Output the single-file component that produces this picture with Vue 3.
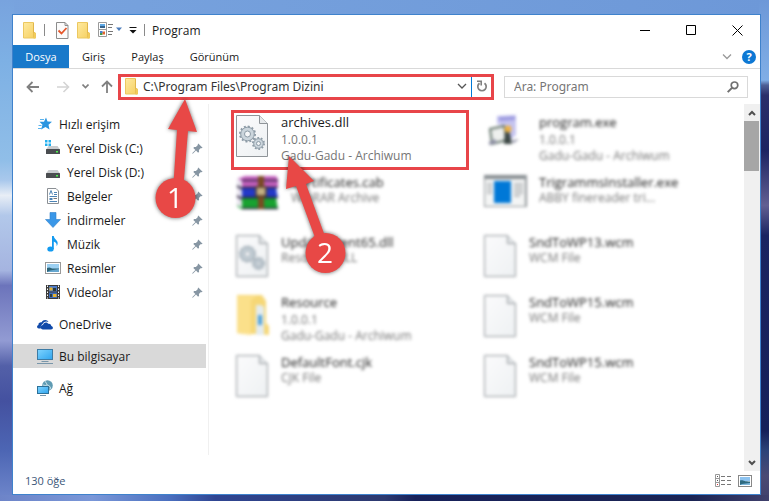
<script setup>
import { ref } from 'vue'

const address = ref('C:\\Program Files\\Program Dizini')
const search = ref('')
const tabs = ['Giriş', 'Paylaş', 'Görünüm']

const places = [
  { label: 'Hızlı erişim', icon: 'star' },
  { label: 'Yerel Disk (C:)', icon: 'driveC', sub: true },
  { label: 'Yerel Disk (D:)', icon: 'drive', sub: true },
  { label: 'Belgeler', icon: 'docs', sub: true },
  { label: 'İndirmeler', icon: 'down', sub: true },
  { label: 'Müzik', icon: 'music', sub: true },
  { label: 'Resimler', icon: 'picture', sub: true },
  { label: 'Videolar', icon: 'video', sub: true },
  { label: 'OneDrive', icon: 'cloud', group: true },
  { label: 'Bu bilgisayar', icon: 'pc', group: true, active: true },
  { label: 'Ağ', icon: 'network', group: true },
]

const files = [
  { name: 'archives.dll', lines: ['1.0.0.1', 'Gadu-Gadu - Archiwum'], icon: 'dll', marked: true },
  { name: 'program.exe', lines: ['1.0.0.1', 'Gadu-Gadu - Archiwum'], icon: 'exe', wide: true },
  { name: 'Certificates.cab', lines: ['WinRAR Archive'], icon: 'rar', wide: true },
  { name: 'TrigrammsInstaller.exe', lines: ['ABBY finereader tri...'], icon: 'app', wide: true },
  { name: 'UpdateAgent65.dll', lines: ['Resource DLL'], icon: 'dll' },
  { name: 'SndToWP13.wcm', lines: ['WCM File'], icon: 'page' },
  { name: 'Resource', lines: ['1.0.0.1', 'Gadu-Gadu - Archiwum'], icon: 'folder' },
  { name: 'SndToWP15.wcm', lines: ['WCM File'], icon: 'page' },
  { name: 'DefaultFont.cjk', lines: ['CJK File'], icon: 'page' },
  { name: 'SndToWP15.wcm', lines: ['WCM File'], icon: 'page' },
]
</script>

<template>
  <div class="desktop">
    <svg class="defs" width="0" height="0" aria-hidden="true">
      <defs>
        <linearGradient id="gFolder" x1="0" y1="0" x2="1" y2="1">
          <stop offset="0" stop-color="#ffeaa0" />
          <stop offset="1" stop-color="#f5cf5f" />
        </linearGradient>
        <linearGradient id="gPage" x1="0" y1="0" x2="1" y2="1">
          <stop offset="0" stop-color="#fbfbfc" />
          <stop offset="1" stop-color="#eef1f3" />
        </linearGradient>
        <linearGradient id="gScreen" x1="0" y1="0" x2="1" y2="1">
          <stop offset="0" stop-color="#7fd4ff" />
          <stop offset="1" stop-color="#2fa4ee" />
        </linearGradient>
        <symbol id="folder" viewBox="0 0 14 17">
          <path d="M0.500 0.500h10v9.500l2 1v5h-12z" fill="url(#gFolder)" stroke="#ecc860" />
          <path d="M10.500 1v14.500" stroke="#e0b64c" />
          <path d="M10.500 10.500l2 1v5h-2z" fill="#f2cb5b" />
        </symbol>
        <symbol id="pin" viewBox="0 0 11 11">
          <path d="M6.300 0.400l4.300 4.300-1 0.600-0.700-0.200-2 2 0.200 1.700-1 0.900-2.100-2.100-3 3-0.800 0.200 0.200-0.800 3-3-2.100-2.100 0.900-1 1.700 0.200 2-2-0.200-0.700z" fill="#8796a3" />
        </symbol>
      </defs>
    </svg>

    <main class="window">
      <header class="titlebar">
        <svg class="i-folder" viewBox="0 0 14 17"><use href="#folder" /></svg>
        <span class="sep first"></span>
        <button class="tool" aria-label="Özellikler">
          <svg width="14" height="17" viewBox="0 0 14 17"><path d="M0.500 0.500h8.500l3 3v13h-11.500z" fill="#fbfbfb" stroke="#8c8c8c" /><path d="M9 0.500v3h3" fill="none" stroke="#8c8c8c" /><path d="M2.500 8.500l3 3 5-5.500" fill="none" stroke="#e5562a" stroke-width="1.800" /></svg>
        </button>
        <button class="tool" aria-label="Yeni klasör">
          <svg class="i-folder" viewBox="0 0 14 17"><use href="#folder" /></svg>
        </button>
        <button class="tool" aria-label="Görünümler">
          <svg width="24" height="16" viewBox="0 0 24 16"><path d="M0.500 0.500h8v7h-8zM0.500 7.500h8v7h-8z" fill="#fff" stroke="#9a9a9a" /><path d="M2 2h5v2h-5z" fill="#5ea9e6" /><path d="M2 4h5v2h-5z" fill="#33628e" /><path d="M2 10h2.500v3h-2.500z" fill="#3f9a4c" /><path d="M4.500 9.500h2.500v3h-2.500z" fill="#e2642f" /><path d="M2 9h2.500v2h-2.500z" fill="#4a7fd0" /><path d="M10 2.500h5M10 5.500h4M10 9.500h5M10 12.500h4" stroke="#777" /><path d="M18 5.500h6l-3 3.500z" fill="#4d7dbb" /></svg>
        </button>
        <button class="tool" aria-label="Hızlı erişim araç çubuğunu özelleştir">
          <svg width="8" height="8" viewBox="0 0 8 8"><path d="M0.500 1h7v1h-7zM0.500 4h7l-3.500 3.500z" fill="#111" /></svg>
        </button>
        <span class="sep"></span>
        <h1 class="title">Program</h1>
        <div class="controls">
          <button aria-label="Simge durumuna küçült"><svg width="11" height="11"><path d="M0 5.500h10" stroke="#000" /></svg></button>
          <button aria-label="Ekranı kapla"><svg width="11" height="11"><path d="M0.500 0.500h9v9h-9z" fill="none" stroke="#000" /></svg></button>
          <button aria-label="Kapat"><svg width="11" height="11"><path d="M0.500 0.500l10 10M10.500 0.500l-10 10" stroke="#000" /></svg></button>
        </div>
      </header>

      <nav class="ribbon">
        <button class="tab file">Dosya</button>
        <button v-for="t in tabs" :key="t" class="tab">{{ t }}</button>
        <span class="grow"></span>
        <button class="tool" aria-label="Şeridi genişlet"><svg width="10" height="6"><path d="M1 0.500l4 4 4-4" fill="none" stroke="#999" stroke-width="1.300" /></svg></button>
        <button class="help" aria-label="Yardım">?</button>
      </nav>

      <div class="navrow">
        <button class="tool" aria-label="Geri"><svg width="14" height="12"><path d="M13 6h-11M6.500 1l-5 5 5 5" fill="none" stroke="#808080" stroke-width="1.800" /></svg></button>
        <button class="tool" aria-label="İleri"><svg width="14" height="12"><path d="M1 6h11M7.500 1l5 5-5 5" fill="none" stroke="#d4d4d4" stroke-width="1.600" /></svg></button>
        <button class="tool close" aria-label="Son konumlar"><svg width="7" height="5"><path d="M0.500 0.500l3 3 3-3" fill="none" stroke="#808080" stroke-width="1.600" /></svg></button>
        <button class="tool" aria-label="Yukarı"><svg width="12" height="13"><path d="M6 13v-11M1 6.500l5-5 5 5" fill="none" stroke="#808080" stroke-width="1.800" /></svg></button>
        <div class="address">
          <svg class="i-folder" viewBox="0 0 14 17"><use href="#folder" /></svg>
          <input v-model="address" type="text" aria-label="Adres" />
          <button class="drop" aria-label="Önceki konumlar"><svg width="10" height="7"><path d="M1 1l4 4 4-4" fill="none" stroke="#555" stroke-width="1.300" /></svg></button>
          <button class="refresh" aria-label="Yenile"><svg width="12" height="13" viewBox="0 0 12 13"><path d="M8.500 3.200a4.200 4.200 0 1 1-5 0" fill="none" stroke="#808080" stroke-width="1.700" /><path d="M1 1.300h4.200v4.200" fill="none" stroke="#808080" stroke-width="1.600" /></svg></button>
        </div>
        <form class="search" @submit.prevent>
          <input v-model="search" type="text" placeholder="Ara: Program" aria-label="Ara: Program" />
          <button class="tool" aria-label="Ara"><svg width="12" height="12"><circle cx="7.500" cy="4.300" r="3.300" fill="none" stroke="#707070" stroke-width="1.700" /><path d="M5.200 6.600l-4.500 4.500" stroke="#707070" stroke-width="2" /></svg></button>
        </form>
      </div>

      <div class="body">
        <aside class="sidebar">
          <a v-for="p in places" :key="p.label" href="#" class="place" :class="{ sub: p.sub, group: p.group, active: p.active }">
            <svg class="picon" width="16" height="16" viewBox="0 0 16 16">
              <g v-if="p.icon === 'star'">
                <path d="M9 1.500l1.500 4 4.500 0.200-3.500 3 1 4.800-4-2.500-4.500 2.500 1.500-4.700-3-3h4.500z" fill="#2b95e0" />
                <path d="M3 3.500h4M1.500 9.500h3M1 12.500h4" stroke="#5bb4ee" />
              </g>
              <g v-else-if="p.icon === 'driveC' || p.icon === 'drive'">
                <path d="M3.500 6h9l2.500 3.500h-14z" fill="#c9cccf" />
                <path v-if="p.icon === 'driveC'" d="M0 0h2.500v2.500H0zM3.500 0h2.500v2.500H3.500zM0 3.500h2.500v2.500H0zM3.500 3.500h2.500v2.500H3.500z" fill="#22b0ef" />
                <rect x="1" y="9" width="14" height="5" rx="0.500" fill="#4a4d50" />
                <rect x="11" y="11" width="2" height="1.500" fill="#4df04d" />
              </g>
              <g v-else-if="p.icon === 'docs'">
                <path d="M2.500 0.500h8.500l2.500 2.500v12.500h-11z" fill="#fff" stroke="#8a8f94" />
                <path d="M4.500 6.500l1.500-4 1.500 4M9 4.500h3M9 6.500h3M4.500 8.500h7.500M4.500 13.500h7.500" fill="none" stroke="#4c83b5" />
                <path d="M4.500 10h3v2h-3z" fill="#4c83b5" /><path d="M8.500 10.500h3.500" stroke="#777" />
              </g>
              <path v-else-if="p.icon === 'down'" d="M5 0.500h6v7h4.500l-7.500 8-7.500-8h4.500z" fill="#3a97e8" stroke="#2f7fcb" stroke-width="0.600" />
              <g v-else-if="p.icon === 'music'" fill="#129af0">
                <ellipse cx="5.500" cy="13" rx="3.200" ry="2.600" />
                <path d="M7 0h1.800c0.200 3 3.700 3.700 3.900 7 0 1.200-0.400 2.300-1 3.200 0.400-2.700-1.200-4-2.900-4.700v7.500h-1.800z" />
              </g>
              <g v-else-if="p.icon === 'picture'">
                <rect x="0.500" y="2.500" width="15" height="11" fill="#fff" stroke="#999" />
                <rect x="2" y="4" width="12" height="8" fill="#9cd0f2" />
                <path d="M2 8c3-1.500 4 0.500 6 0.500h6v3.500h-12z" fill="#2d6478" />
                <path d="M5 10.500l9-1.500v3h-12z" fill="#66a7cf" />
              </g>
              <g v-else-if="p.icon === 'video'">
                <rect x="1" y="1" width="14" height="14" fill="#3a3a3a" />
                <path d="M2.500 1.500v13M13.500 1.500v13" stroke="#fff" stroke-dasharray="1.500 1.500" />
                <rect x="4" y="2" width="8" height="5.500" fill="#4c79c7" /><rect x="4" y="8.500" width="8" height="5.500" fill="#3f6cb9" />
                <path d="M4.500 3.500h3v3h-3zM8 10h3.500v3h-3.500z" fill="#e7b32e" /><path d="M8 4h3v3h-3zM5 10h2v3h-2z" fill="#2d3c3c" />
              </g>
              <path v-else-if="p.icon === 'cloud'" d="M6 13.500c-3 0-3.200-4.200 0-4.500 0.300-2.800 4-3.500 5.200-1.200 2-0.500 3.200 1 3 2.200 2.300 0.300 2.300 3.500-0.200 3.500zM3.800 12.500c-0.500-2 0.300-3.500 1.700-4.200 0.700-2.500 3.500-3.700 6-2.300-1-2.500-5.500-3-6.800 0.300-2-0.400-3.700 1-3.200 2.700-2 0.500-1.900 3.500 0.300 3.500z" fill="#1049a9" />
              <g v-else-if="p.icon === 'pc'">
                <rect x="0.500" y="1.500" width="15" height="10" fill="url(#gScreen)" stroke="#3c7ba5" />
                <path d="M4.500 13.500h7M0 15.500h16" stroke="#7996aa" />
              </g>
              <g v-else>
                <circle cx="10.500" cy="5.500" r="5.300" fill="#5f9bb3" />
                <path d="M8 1.500c2 1 1 3 3 4s3 1 2 4M6 5c1 0 2 1 4 0" stroke="#d8ecf2" fill="none" />
                <rect x="0.500" y="6.500" width="11" height="7" fill="url(#gScreen)" stroke="#2d7199" />
                <path d="M3 15.500h6" stroke="#7996aa" />
              </g>
            </svg>
            <span class="grow">{{ p.label }}</span>
            <svg v-if="p.sub" class="pin" width="11" height="11"><use href="#pin" /></svg>
          </a>
        </aside>

        <section class="files">
          <article v-for="(f, i) in files" :key="i" class="file-item" :class="{ marked: f.marked }">
            <svg class="ficon" :class="{ wide: f.wide }" :viewBox="f.wide ? '0 0 42 42' : '0 0 32 42'">
              <template v-if="f.icon === 'dll' || f.icon === 'page'">
                <path d="M0.500 0.500h23l8 8v33h-31z" fill="url(#gPage)" stroke="#8f9498" />
                <path d="M23.500 0.500v8h8" fill="#e6e9eb" stroke="#8f9498" />
                <g v-if="f.icon === 'dll'" fill="none" stroke="#8d9ba6">
                  <circle cx="11.500" cy="19" r="7.500" stroke-width="2" stroke-dasharray="2 1.930" />
                  <circle cx="11.500" cy="19" r="5" stroke="#cbd5dc" stroke-width="4" />
                  <circle cx="11.500" cy="19" r="6.800" /><circle cx="11.500" cy="19" r="3" />
                  <circle cx="22.500" cy="28.500" r="5.500" stroke-width="2" stroke-dasharray="1.700 1.750" />
                  <circle cx="22.500" cy="28.500" r="3.500" stroke="#cbd5dc" stroke-width="3" />
                  <circle cx="22.500" cy="28.500" r="4.800" /><circle cx="22.500" cy="28.500" r="2" />
                </g>
              </template>
              <template v-else-if="f.icon === 'folder'">
                <path d="M1 0h25l4 6v22l3 3v9l-12-1H7L1 38z" fill="#f6d776" />
                <path d="M1 1h20l-6 4v35l-8-1-6-2z" fill="#fbe08a" />
                <path d="M20 10h5l3 2v28h-8z" fill="#e4ecef" />
                <path d="M22 20h4v10h-4z" fill="#4ea0d8" />
              </template>
              <template v-else-if="f.icon === 'rar'">
                <path d="M1 4l8-3h31l2 3v9H4z" fill="#c45fbe" /><path d="M2 13h38l2 10H4z" fill="#2339c8" /><path d="M2 23h38l2 11H5l-4-3z" fill="#18a230" />
                <path d="M1 3l5 3v27l-5-3z" fill="#e8e4ef" /><path d="M6 5.500h36M6 12.500h36M6 22.500h36M6 33.500h36" stroke="#28203c" stroke-width="1.500" />
                <path d="M1 11l5 3M1 21l5 3" stroke="#28203c" stroke-width="2" />
                <path d="M22 1h6v33h-6z" fill="#7a4a22" /><path d="M20 12h10v9h-10z" fill="#c5b184" stroke="#4d3926" stroke-width="1.500" />
              </template>
              <template v-else-if="f.icon === 'app'">
                <rect x="0.500" y="0.500" width="42" height="31" fill="#f4f5f5" stroke="#8f9498" />
                <path d="M0 0h42v4H0z" fill="#858b8f" /><path d="M41.500 0v32" stroke="#8f9498" />
                <path d="M10 6h17v22H10z" fill="#0078d7" />
                <path d="M3 9h5M3 12h5M3 15h5M3 18h5M30 9h9M30 12h9M30 15h9M30 18h9M30 21h6" stroke="#a9adb0" stroke-width="1.500" />
              </template>
              <g v-else transform="translate(2 0)">
                <path d="M11 1l19-1v20l-6 5-4-14-9-2z" fill="#c5c4f0" /><path d="M12 2l17-1v4l-15 1z" fill="#9d9be0" />
                <path d="M4 14l14-3 3 14-15 4z" fill="#eef0ee" stroke="#64756b" stroke-width="2" />
                <path d="M19 12l4 2 3 15h-8z" fill="#3c4744" /><circle cx="22" cy="14" r="3.500" fill="#edb245" />
                <path d="M3 27l6-3 2 4-8 2zM24 26l9-2-5 4z" fill="#8d8fa5" />
              </g>
            </svg>
            <div class="meta" :class="{ tall: f.lines.length > 1 }">
              <h2>{{ f.name }}</h2>
              <p v-for="l in f.lines" :key="l">{{ l }}</p>
            </div>
          </article>
        </section>

        <div class="scroll">
          <button aria-label="Yukarı kaydır"><svg width="8" height="6"><path d="M1 5l3-3 3 3" fill="none" stroke="#505050" stroke-width="2" /></svg></button>
          <div class="thumb"></div>
          <span class="grow"></span>
          <button aria-label="Aşağı kaydır"><svg width="8" height="6"><path d="M1 1l3 3 3-3" fill="none" stroke="#505050" stroke-width="2" /></svg></button>
        </div>
      </div>

      <footer class="status">
        <span class="grow">130 öğe</span>
        <button class="tool" aria-label="Ayrıntılar"><svg width="16" height="13"><path d="M0.500 0.500h4v12h-4zM0.500 4.500h4M0.500 8.500h4" fill="none" stroke="#999" /><path d="M6 2.500h4M12 2.500h4M6 6.500h4M12 6.500h4M6 10.500h4M12 10.500h4" stroke="#777" /><path d="M2 2h1v1h-1zM2 6h1v1h-1z" fill="#555" /><path d="M2 10h1v1h-1z" fill="#d33" /></svg></button>
        <button class="tool" aria-label="Büyük simgeler"><svg width="14" height="12"><rect x="0.500" y="0.500" width="13" height="11" fill="#fff" stroke="#888" /><path d="M2 2h10v4h-10z" fill="#8dc3f0" /><path d="M2 5.500c3-1 4 1 10 1v3.500h-10z" fill="#2d6a80" /><path d="M4 9l8-1v2h-10z" fill="#7db7dc" /></svg></button>
      </footer>
    </main>

    <svg class="callout one" width="50" height="132" viewBox="0 0 50 132">
      <path d="M33 5l12 33-9-1-5 60h-10l4-61-9-1z" />
      <circle cx="23.500" cy="104" r="20" />
      <text x="23" y="114" text-anchor="middle">1</text>
    </svg>
    <svg class="callout two" width="70" height="126" viewBox="0 0 70 126">
      <path d="M9 5l25 25-8 3 20 55-9 4-21-57-10 3z" />
      <circle cx="45.500" cy="102" r="20" />
      <text x="45" y="112" text-anchor="middle">2</text>
    </svg>
  </div>
</template>

<style>
body {
  margin: 0;
}
</style>

<style scoped>
.desktop {
  position: relative;
  box-sizing: border-box;
  min-height: 100vh;
  display: flex;
  padding: 14px 8px 6px 12px;
  font-family: "Open Sans", "Noto Sans", sans-serif;
  font-size: 12px;
  color: #1a1a1a;
  background:
    linear-gradient(90deg, #6d84c8, #7a97d8 12%, #4a6fbf 22%, #2f4592 28%, #2d396f 50%, #17215a 54%, #1b2454 90%, #40406c) bottom / 100% 6px no-repeat,
    linear-gradient(#78a3de, #7db0e4 12%, #90bee8 32%, #a9c8ec 36%, #e8eef6 39%, #b2c8ea 43%, #a5b4e0 54%, #6c74bb 57%, #929bd3 68%, #5360a8 73%, #4451a0 80%, #4d66b4 90%, #7088cc) left / 14px 100% no-repeat,
    linear-gradient(#6d98d8, #80aee6 16%, #4d5f96 17%, #2a2f6a 19%, #1c2462 30%, #625f92 41%, #1a2461 47%, #15205a 86%, #2c4378 90%, #4b4a74 95%, #40406c) right / 10px 100% no-repeat,
    linear-gradient(90deg, #78a3de, #6d98d8);
}
.defs,
.callout {
  position: absolute;
}
button {
  border: 0;
  padding: 0;
  margin: 0;
  background: none;
  font: inherit;
  color: inherit;
  display: flex;
  align-items: center;
  justify-content: center;
}
input {
  flex: 1;
  min-width: 0;
  border: 0;
  padding: 0;
  outline: 0;
  background: none;
  font: inherit;
  font-family: "Noto Sans", sans-serif;
  color: #333;
}
svg {
  flex: none;
  display: block;
}
.grow {
  flex: 1;
}
.window {
  flex: 1;
  min-width: 0;
  display: flex;
  flex-direction: column;
  border: 1px solid #3f82cc;
  background: #fff;
}
.i-folder {
  width: 14px;
  height: 17px;
}
.titlebar {
  display: flex;
  align-items: center;
  height: 30px;
  gap: 7px;
  padding-left: 10px;
}
.sep {
  width: 1px;
  height: 12px;
  background: #8a8a8a;
}
.sep.first {
  margin-right: 4px;
}
.title {
  margin: 0;
  font-size: 12px;
  font-weight: 400;
}
.controls {
  margin-left: auto;
  display: flex;
}
.controls button {
  width: 46px;
  height: 28px;
}
.ribbon {
  display: flex;
  align-items: center;
  height: 23px;
  padding-right: 4px;
  border-bottom: 1px solid #d9d9d9;
  font-size: 11px;
}
.tab {
  height: 23px;
  padding: 0 13px;
}
.tab.file {
  width: 56px;
  padding: 0;
  background: #1979ca;
  color: #fff;
}
.help {
  width: 14px;
  height: 14px;
  margin-left: 10px;
  border-radius: 50%;
  background: #0d78d4;
  color: #fff;
  font-weight: 700;
}
.navrow {
  display: flex;
  align-items: center;
  height: 35px;
  padding: 0 12px 0 13px;
  gap: 12px;
}
.navrow > .tool:first-child {
  margin-right: 4px;
}
.address {
  flex: 1;
  box-sizing: border-box;
  display: flex;
  align-items: center;
  height: 26px;
  margin-left: -7px;
  border: 3px solid #e84549;
}
.address .i-folder {
  margin: 0 4px;
}
.drop {
  width: 18px;
}
.refresh {
  width: 20px;
  height: 20px;
  border-left: 1px solid #0078d7;
}
.search {
  box-sizing: border-box;
  display: flex;
  align-items: center;
  width: 244px;
  height: 22px;
  margin-left: -2px;
  padding: 0 8px 0 9px;
  border: 1px solid #d9d9d9;
}
.search input::placeholder {
  color: #767676;
  opacity: 1;
}
.body {
  flex: 1;
  display: flex;
  align-items: stretch;
}
.sidebar {
  box-sizing: border-box;
  width: 196px;
  margin-bottom: 16px;
  padding: 8px 2px 0 0;
  border-right: 1px solid #f0f0f0;
}
.place {
  display: flex;
  align-items: center;
  gap: 6px;
  height: 24px;
  padding: 0 3px 0 24px;
  color: inherit;
  text-decoration: none;
}
.place.sub {
  padding-left: 32px;
}
.place.group {
  margin-top: 8px;
}
.place.active {
  background: #d9d9d9;
}
.files {
  flex: 1;
  display: grid;
  grid-template-columns: repeat(auto-fill, 238px);
  grid-auto-rows: 60px;
  column-gap: 10px;
  padding: 6px 0 0 22px;
}
.file-item {
  box-sizing: border-box;
  display: flex;
  gap: 13px;
  padding: 2px;
  border: 3px solid transparent;
  white-space: nowrap;
}
.file-item.marked {
  border-color: #e84549;
}
.file-item:not(.marked),
.file-item:not(.marked) .ficon,
.file-item:not(.marked) .meta {
  filter: blur(1px);
}
.ficon {
  width: 32px;
  height: 42px;
  overflow: visible;
}
.ficon.wide {
  width: 42px;
}
.meta {
  margin-top: -1px;
}
.meta h2,
.meta p {
  margin: 0;
  font-size: 13px;
  font-weight: 400;
  line-height: 16px;
}
.meta.tall {
  margin-top: -3px;
}
.meta.tall h2 {
  line-height: 20px;
}
.meta p {
  font-size: 12px;
  color: #767676;
}
.scroll {
  display: flex;
  flex-direction: column;
  width: 16px;
  background: #f0f0f0;
}
.scroll button {
  height: 17px;
}
.thumb {
  width: 15px;
  height: 50px;
  background: #a6a6a6;
}
.status {
  display: flex;
  align-items: center;
  gap: 7px;
  height: 23px;
  padding: 0 8px 4px 12px;
  box-sizing: border-box;
  font-size: 11px;
  color: #3b5678;
}
.callout {
  fill: #e84846;
  filter: drop-shadow(0 0 2px rgba(0, 0, 0, 0.6));
}
.callout text {
  fill: #fff;
  font-size: 28px;
}
.one {
  left: 152px;
  top: 94px;
}
.two {
  left: 280px;
  top: 151px;
}
</style>
